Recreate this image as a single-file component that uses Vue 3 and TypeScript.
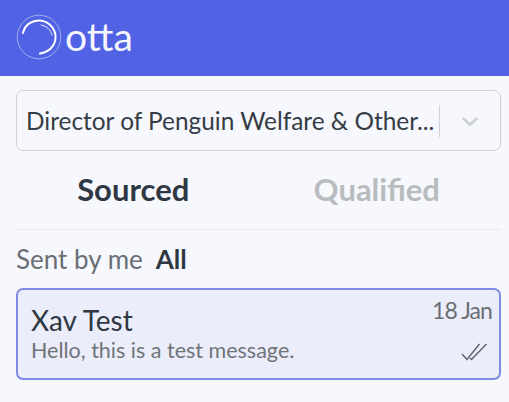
<script setup lang="ts">
const title = 'Director of Penguin Welfare & Other...'
</script>

<template>
  <div class="page">
    <header class="topbar">
      <svg class="mark" viewBox="0 0 46 46" width="46" height="46" fill="none" stroke="#fff">
        <circle cx="23" cy="23" r="21.8" stroke-width="0.7" opacity="0.65" />
        <path d="M7 19 C9 10 17 6 24 6.5 C34 7.5 40 16 39.5 24 C39 32 33 38 24 39.5" stroke-width="2" stroke-linecap="round" />
        <path d="M25 11 C31 12 35 16 36 21" stroke-width="1" stroke-linecap="round" opacity="0.85" />
      </svg>
      <span class="brand">otta</span>
    </header>
    <main class="content">
      <div class="select">
        <span class="select-text">{{ title }}</span>
        <span class="divider"></span>
        <svg class="chevron" viewBox="0 0 20 12" width="18" height="11" fill="none" stroke="#cdd0d4" stroke-width="3">
          <path d="M2 2 L10 9.5 L18 2" />
        </svg>
      </div>
      <nav class="tabs">
        <span class="tab active">Sourced</span>
        <span class="tab qualified">Qualified</span>
      </nav>
      <div class="filter">
        <span class="filter-muted">Sent by me</span>
        <span class="filter-on">All</span>
      </div>
      <article class="card">
        <div class="card-main">
          <div class="name">Xav Test</div>
          <div class="preview">Hello, this is a test message.</div>
        </div>
        <div class="card-side">
          <span class="date">18 Jan</span>
          <svg class="ticks" viewBox="0 0 28 20" width="28" height="20" fill="none" stroke="#5c6167" stroke-width="1.4">
            <path d="M1 12 L6 17.5 L18.5 2" />
            <path d="M9 16 L10.5 17.5 L25.5 2" />
          </svg>
        </div>
      </article>
    </main>
  </div>
</template>

<style>
html, body { margin: 0; background: #f6f8fe; }
</style>

<style scoped>
.page {
  width: 509px;
  height: 402px;
  overflow: hidden;
  background: #f6f8fe;
  font-family: Lato, "Noto Sans", sans-serif;
  color: #2f3842;
}
.topbar {
  height: 76px;
  box-sizing: border-box;
  background: #5163e4;
  display: flex;
  align-items: center;
  padding: 0 0 2px 16px;
  gap: 3px;
}
.mark { flex: none; }
.brand {
  font-size: 39px;
  line-height: 1;
  color: #f4f5fd;
  font-weight: 400;
  padding-bottom: 1px;
}
.content {
  padding: 14px 8px 0 16px;
}
.select {
  box-sizing: border-box;
  height: 61px;
  border: 1.5px solid #cfd2d8;
  border-radius: 7px;
  display: flex;
  align-items: center;
  padding-left: 9px;
}
.select-text {
  flex: 1;
  font-size: 24.4px;
  white-space: nowrap;
  min-width: 0;
  color: #353c44;
}
.divider {
  width: 1.5px;
  height: 32px;
  background: #cfd2d8;
}
.chevron { margin: 2px 21px 0 21px; }
.tabs {
  display: flex;
  height: 79px;
  box-sizing: border-box;
  border-bottom: 1.5px solid #e7e9ee;
  padding-top: 18px;
}
.tab {
  width: 50%;
  box-sizing: border-box;
  text-align: center;
  font-size: 31px;
  font-weight: 700;
  color: #b9bcbf;
  line-height: 40px;
}
.tab.active {
  color: #2f3842;
  padding-right: 8px;
}
.tab.qualified { padding-right: 6px; }
.filter {
  display: flex;
  gap: 13px;
  font-size: 26px;
  line-height: 32px;
  margin-top: 13px;
}
.filter-muted { color: #6a6f74; }
.filter-on { font-weight: 700; }
.card {
  box-sizing: border-box;
  margin-top: 13px;
  height: 92px;
  background: #ebedfb;
  border: 2px solid #7f8be2;
  border-radius: 7px;
  display: flex;
  justify-content: space-between;
  padding: 0 7px 0 13px;
}
.card-main { padding-top: 13px; }
.name {
  font-size: 28px;
  line-height: 34px;
}
.preview {
  font-size: 21.5px;
  line-height: 27px;
  color: #6f7479;
}
.card-side {
  display: flex;
  flex-direction: column;
  align-items: flex-end;
  justify-content: space-between;
  padding: 5px 3px 16px 0;
}
.date {
  font-size: 23px;
  line-height: 30px;
  letter-spacing: -0.9px;
  color: #6a6f74;
  margin-right: -3px;
}
</style>
